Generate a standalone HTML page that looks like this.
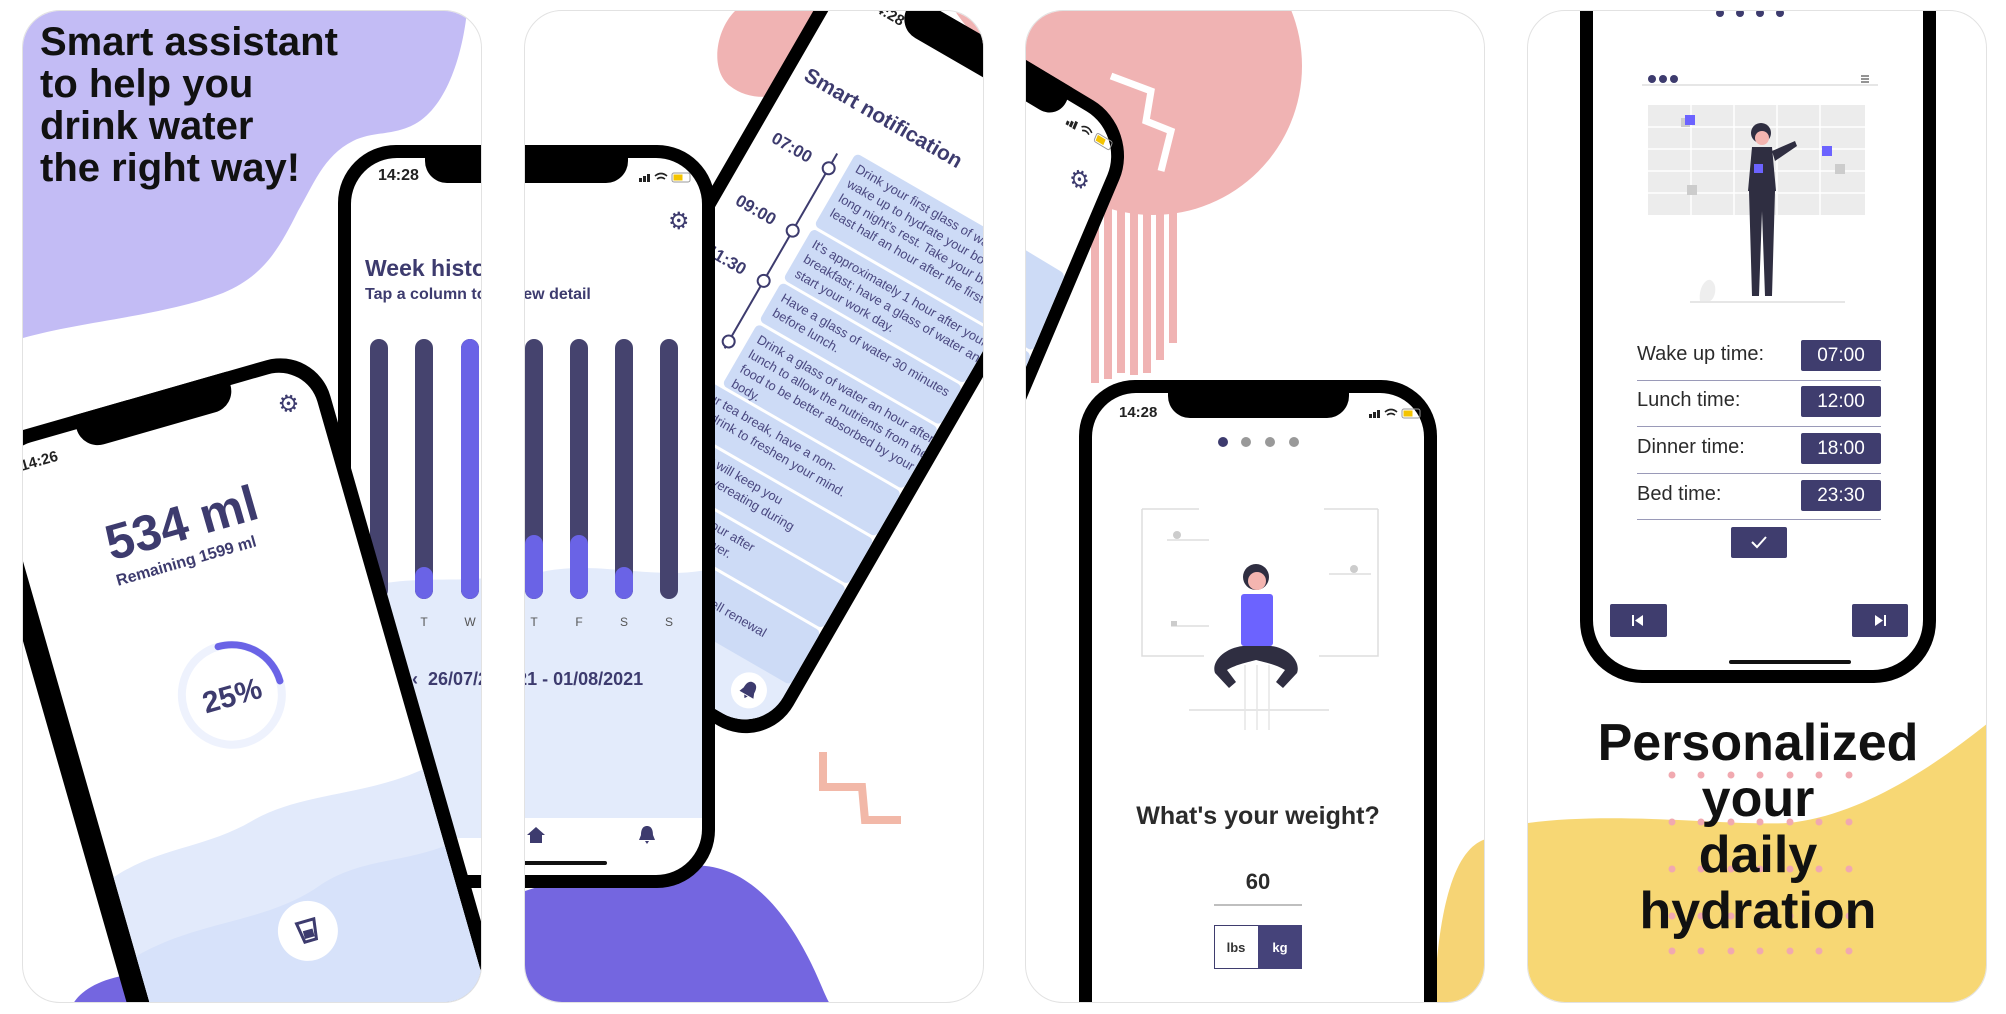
<!DOCTYPE html>
<html><head><meta charset="utf-8">
<style>
*{margin:0;padding:0;box-sizing:border-box}
html,body{width:2006px;height:1014px;overflow:hidden}
body{background:#fff;position:relative;font-family:"Liberation Sans","DejaVu Sans",sans-serif}
.panel{position:absolute;top:10px;width:460px;height:993px;border-radius:38px;overflow:hidden;border:1px solid #e2e2e2;background:#fff}
.abs{position:absolute}
.phone{position:absolute;background:#000}
.screen{position:absolute;background:#fff;overflow:hidden}
.notch{position:absolute;top:0;background:#000;border-radius:0 0 22px 22px}
.b{font-weight:bold}
.gear{position:absolute;font-family:"DejaVu Sans",sans-serif;color:#3d3b6e;line-height:1}
.bar{position:absolute;width:18px;border-radius:9px;background:#45436e;overflow:hidden}
.bar i{position:absolute;left:0;right:0;bottom:0;background:#6a63e6;border-radius:9px}
.day{position:absolute;font-size:12px;color:#555;width:20px;text-align:center}
.card{position:absolute;background:#cddbf6;color:#4a4880;font-size:13px;line-height:17px;padding:4px 8px;border-radius:5px;white-space:nowrap;overflow:hidden}
.tl{position:absolute;font-size:17px;font-weight:bold;color:#3d3b6e}
.circ{position:absolute;width:14px;height:14px;border-radius:50%;border:2px solid #3d3b6e;background:#fff}
.row{position:absolute;left:57px;width:244px;height:1px;background:#9a9ab8}
.lab{position:absolute;left:57px;font-size:20px;color:#2b2b2b}
.tbox{position:absolute;left:221px;width:80px;height:31px;background:#3f3d6e;color:#fff;font-size:19px;text-align:center;line-height:31px;border-radius:2px}
</style></head><body>

<!-- PANEL 1 -->
<div class="panel" style="left:22px">
  <svg class="abs" style="left:0;top:0" width="460" height="993">
    <path d="M0,0 L444,0 C440,40 425,95 392,113 C370,125 350,120 330,130 C300,145 290,175 275,200 C255,240 240,265 200,282 C140,305 60,310 0,327 Z" fill="#c3bcf5"/>
    <path d="M50,993 C60,975 90,962 130,962 L150,993 Z" fill="#7466e0"/>
  </svg>
  <div class="abs b" style="left:17px;top:10px;font-size:40px;line-height:42px;color:#111">Smart assistant<br>to help you<br>drink water<br>the right way!</div>

  <!-- phone 2 (week) part -->
  <div class="phone" style="left:315px;top:134px;width:358px;height:743px;border-radius:58px">
    <div class="screen" style="left:13px;top:13px;right:13px;bottom:13px;border-radius:46px">
      <svg class="abs" style="left:-13px;top:380px" width="358" height="300"><path d="M0,60 C60,30 120,50 180,35 C240,20 300,45 358,30 L358,300 L0,300Z" fill="#e3ebfb"/></svg>
    </div>
    <div class="notch" style="left:87px;width:184px;height:38px"></div>
    <div class="abs b" style="left:40px;top:22px;font-size:16px;color:#222">14:28</div>
    <div class="abs b" style="left:27px;top:110px;font-size:23px;color:#3d3b6e">Week history</div>
    <div class="abs b" style="left:27px;top:141px;font-size:16px;color:#3d3b6e">Tap a column to view detail</div>
    <div class="bar" style="left:32px;top:194px;height:260px"></div>
    <div class="bar" style="left:77px;top:194px;height:260px"><i style="height:32px"></i></div>
    <div class="bar" style="left:123px;top:194px;height:260px"><i style="height:260px"></i></div>
    <div class="day" style="left:31px;top:470px">M</div><div class="day" style="left:76px;top:470px">T</div><div class="day" style="left:122px;top:470px">W</div>
    <div class="abs b" style="left:74px;top:524px;font-size:18px;color:#3d3b6e">‹ &nbsp;26/07/2021 - 01/08/2021</div>
  </div>

  <!-- phone 1 rotated -->
  <div class="phone" style="left:-70px;top:335px;width:363px;height:1000px;border-radius:52px;transform-origin:363px 0;transform:rotate(-16deg)">
    <div class="screen" style="left:22px;top:14px;right:14px;bottom:14px;border-radius:40px">
      <svg class="abs" style="left:-22px;top:380px" width="363" height="620"><path d="M0,70 C60,40 110,60 170,45 C230,30 290,55 363,40 L363,620 L0,620Z" fill="#e2eafb"/><path d="M0,150 C80,120 150,150 220,125 C270,110 310,130 363,120 L363,620 L0,620Z" fill="#d7e2fa"/></svg>
    </div>
    <div class="notch" style="left:110px;width:160px;height:36px"></div>
    <div class="abs b" style="left:46px;top:26px;font-size:15px;color:#222">14:26</div>
    <div class="gear" style="left:310px;top:36px;font-size:24px">⚙</div>
    <div class="abs b" style="left:55px;top:104px;width:260px;text-align:center;font-size:50px;color:#3d3b6e">534 ml</div>
    <div class="abs b" style="left:49px;top:163px;width:260px;text-align:center;font-size:16px;color:#3d3b6e">Remaining 1599 ml</div>
    <svg class="abs" style="left:130px;top:256px" width="112" height="112"><circle cx="56" cy="56" r="50" fill="#fff" stroke="#eef2fd" stroke-width="8"/><path d="M56,6 A50,50 0 0 1 106,56" fill="none" stroke="#6a63e6" stroke-width="7" stroke-linecap="round"/><text x="56" y="67" text-anchor="middle" font-size="30" font-weight="bold" fill="#3d3b6e" font-family="Liberation Sans">25%</text></svg>
    <div class="abs" style="left:164px;top:530px;width:60px;height:60px;border-radius:50%;background:#fff"></div>
    <svg class="abs" style="left:182px;top:547px" width="24" height="26"><path d="M3,3 L21,3 L18,23 L6,23 Z" fill="none" stroke="#3d3b6e" stroke-width="3"/><rect x="7" y="12" width="10" height="8" fill="#3d3b6e"/></svg>
  </div>
</div>

<!-- PANEL 2 -->
<div class="panel" style="left:524px">
  <svg class="abs" style="left:0;top:0" width="460" height="993">
    <path d="M210,0 C190,20 185,60 205,75 C230,95 270,85 290,65 L295,0Z" fill="#f0b3b3"/>
    <path d="M430,0 L462,0 L462,40 C450,25 440,15 430,0Z" fill="#f0b3b3"/>
    <path d="M0,880 C60,860 120,860 160,855 C220,848 260,900 285,950 C295,970 300,985 305,993 L0,993Z" fill="#7466e0"/>
    <polyline points="298,741 298,776 337,776 340,809 376,809" fill="none" stroke="#f2b8a8" stroke-width="8"/>
  </svg>
  <!-- phone 3 rotated -->
  <div class="phone" style="left:320px;top:-55px;width:330px;height:730px;border-radius:55px;transform-origin:0 0;transform:rotate(30deg)">
    <div class="screen" style="left:13px;top:13px;right:13px;bottom:13px;border-radius:44px">
      <svg class="abs" style="left:-13px;top:600px" width="330" height="130"><path d="M0,40 C80,20 200,50 330,25 L330,130 L0,130Z" fill="#e3ebfb"/></svg>
    </div>
    <div class="notch" style="left:80px;width:170px;height:36px"></div>
    <div class="abs b" style="left:45px;top:20px;font-size:15px;color:#222">14:28</div>
    <div class="abs b" style="left:25px;top:110px;font-size:21px;color:#3d3b6e">Smart notification</div>
    <div class="abs" style="left:91px;top:175px;width:2px;height:225px;background:#3d3b6e"></div>
    <div class="tl" style="left:28px;top:183px">07:00</div><div class="circ" style="left:85px;top:185px"></div>
    <div class="tl" style="left:28px;top:255px">09:00</div><div class="circ" style="left:85px;top:257px"></div>
    <div class="tl" style="left:28px;top:313px">11:30</div><div class="circ" style="left:85px;top:315px"></div>
    <div class="circ" style="left:85px;top:385px"></div>
    <div class="card" style="left:108px;top:165px;width:209px;height:84px">Drink your first glass of water after you<br>wake up to hydrate your body after a<br>long night's rest. Take your breakfast at<br>least half an hour after the first glass.</div>
    <div class="card" style="left:108px;top:252px;width:209px;height:59px">It's approximately 1 hour after your<br>breakfast; have a glass of water and<br>start your work day.</div>
    <div class="card" style="left:108px;top:314px;width:209px;height:45px">Have a glass of water 30 minutes<br>before lunch.</div>
    <div class="card" style="left:108px;top:362px;width:209px;height:71px">Drink a glass of water an hour after<br>lunch to allow the nutrients from the<br>food to be better absorbed by your<br>body.</div>
    <div class="card" style="left:40px;top:436px;width:277px;height:52px">During your tea break, have a non-<br>sweetened drink to freshen your mind.</div>
    <div class="card" style="left:40px;top:491px;width:277px;height:52px">A glass of water will keep you<br>full and prevent overeating during</div>
    <div class="card" style="left:40px;top:546px;width:277px;height:48px">A glass of water an hour after<br>dinner, before you shower.</div>
    <div class="card" style="left:40px;top:597px;width:277px;height:62px">A glass of water an hour<br>before sleep will aid in the cell renewal<br>process during sleep.</div>
    <div class="abs" style="left:266px;top:666px;width:36px;height:36px;border-radius:50%;background:#fff"></div>
    <svg class="abs" style="left:274px;top:673px" width="20" height="22"><path d="M10,2 C5,2 4,7 4,11 L2,16 L18,16 L16,11 C16,7 15,2 10,2Z M8,17 L12,17 L10,20Z" fill="#3d3b6e"/></svg>
  </div>
  <!-- phone 2 part -->
  <div class="phone" style="left:-168px;top:134px;width:358px;height:743px;border-radius:58px">
    <div class="screen" style="left:13px;top:13px;right:13px;bottom:13px;border-radius:46px">
      <svg class="abs" style="left:-13px;top:380px" width="358" height="300"><path d="M0,60 C60,30 120,50 180,35 C240,20 300,45 358,30 L358,280 L0,280Z" fill="#e3ebfb"/></svg>
    </div>
    <div class="notch" style="left:87px;width:184px;height:38px"></div>
    <svg class="abs" style="left:282px;top:26px" width="56" height="12"><rect x="0" y="7" width="3" height="4" fill="#222"/><rect x="4" y="5" width="3" height="6" fill="#222"/><rect x="8" y="3" width="3" height="8" fill="#222"/><path d="M16,5 Q22,0 28,5 M18,8 Q22,5 26,8" stroke="#222" stroke-width="1.6" fill="none"/><rect x="33" y="2" width="18" height="9" rx="2" fill="none" stroke="#999"/><rect x="34.5" y="3.5" width="9" height="6" fill="#f4c400"/></svg>
    <div class="gear" style="left:311px;top:64px;font-size:24px">⚙</div>
    <div class="abs b" style="left:27px;top:141px;font-size:16px;color:#3d3b6e">Tap a column to view detail</div>
    <div class="bar" style="left:168px;top:194px;height:260px"><i style="height:64px"></i></div>
    <div class="bar" style="left:213px;top:194px;height:260px"><i style="height:64px"></i></div>
    <div class="bar" style="left:258px;top:194px;height:260px"><i style="height:32px"></i></div>
    <div class="bar" style="left:303px;top:194px;height:260px"></div>
    <div class="day" style="left:167px;top:470px">T</div><div class="day" style="left:212px;top:470px">F</div><div class="day" style="left:257px;top:470px">S</div><div class="day" style="left:302px;top:470px">S</div>
    <div class="abs b" style="left:74px;top:524px;font-size:18px;color:#3d3b6e">‹ &nbsp;26/07/2021 - 01/08/2021</div>
    <svg class="abs" style="left:168px;top:680px" width="22" height="20"><path d="M11,2 L2,10 L5,10 L5,18 L17,18 L17,10 L20,10Z" fill="#3d3b6e"/></svg>
    <svg class="abs" style="left:280px;top:679px" width="20" height="22"><path d="M10,2 C5,2 4,7 4,11 L2,16 L18,16 L16,11 C16,7 15,2 10,2Z M8,17 L12,17 L10,20Z" fill="#3d3b6e"/></svg>
    <div class="abs" style="left:110px;top:716px;width:140px;height:4px;background:#111;border-radius:2px"></div>
  </div>
</div>

<!-- PANEL 3 -->
<div class="panel" style="left:1025px">
  <svg class="abs" style="left:0;top:0" width="460" height="993">
    <circle cx="127" cy="55" r="149" fill="#f0b3b3"/>
    <g fill="#f0b3b3"><rect x="65" y="190" width="8" height="182"/><rect x="78" y="190" width="8" height="178"/><rect x="91" y="190" width="8" height="172"/><rect x="104" y="190" width="8" height="174"/><rect x="117" y="190" width="8" height="172"/><rect x="130" y="190" width="8" height="159"/><rect x="143" y="190" width="8" height="142"/></g>
    <path d="M85,65 L125,80 L120,110 L145,120 L135,160" fill="none" stroke="#fff" stroke-width="7"/>
    <path d="M460,828 C437,835 413,870 408,993 L460,993Z" fill="#f6d475"/>
  </svg>
  <!-- phone 3 continued -->
  <div class="phone" style="left:0;top:0;width:330px;height:730px;border-radius:55px;transform-origin:0 0;transform:matrix(0.857,0.515,-0.39,0.92,-168,-52)">
    <div class="screen" style="left:13px;top:13px;right:13px;bottom:13px;border-radius:44px"></div>
    <div class="notch" style="left:80px;width:170px;height:36px"></div>
    <svg class="abs" style="left:258px;top:24px" width="56" height="12"><rect x="0" y="7" width="3" height="4" fill="#222"/><rect x="4" y="5" width="3" height="6" fill="#222"/><rect x="8" y="3" width="3" height="8" fill="#222"/><path d="M16,5 Q22,0 28,5 M18,8 Q22,5 26,8" stroke="#222" stroke-width="1.6" fill="none"/><rect x="33" y="2" width="18" height="9" rx="2" fill="none" stroke="#999"/><rect x="34.5" y="3.5" width="9" height="6" fill="#f4c400"/></svg>
    <div class="gear" style="left:282px;top:64px;font-size:24px">⚙</div>
    <div class="card" style="left:210px;top:165px;width:107px;height:84px">after you<br>after a<br>breakfast at<br>glass.</div>
    <div class="card" style="left:210px;top:252px;width:107px;height:59px">your<br>and</div>
    <div class="card" style="left:210px;top:314px;width:107px;height:45px"></div>
  </div>
  <!-- phone 4 -->
  <div class="phone" style="left:53px;top:369px;width:358px;height:700px;border-radius:56px">
    <div class="screen" style="left:13px;top:13px;right:13px;bottom:0;border-radius:44px 44px 0 0"></div>
    <div class="notch" style="left:89px;width:181px;height:38px"></div>
    <div class="abs b" style="left:40px;top:24px;font-size:15px;color:#222">14:28</div>
    <svg class="abs" style="left:290px;top:27px" width="56" height="12"><rect x="0" y="7" width="3" height="4" fill="#222"/><rect x="4" y="5" width="3" height="6" fill="#222"/><rect x="8" y="3" width="3" height="8" fill="#222"/><path d="M16,5 Q22,0 28,5 M18,8 Q22,5 26,8" stroke="#222" stroke-width="1.6" fill="none"/><rect x="33" y="2" width="18" height="9" rx="2" fill="none" stroke="#999"/><rect x="34.5" y="3.5" width="9" height="6" fill="#f4c400"/></svg>
    <svg class="abs" style="left:0;top:0" width="358" height="700">
      <circle cx="144" cy="62" r="5" fill="#3d3b6e"/><circle cx="167" cy="62" r="5" fill="#999"/><circle cx="191" cy="62" r="5" fill="#999"/><circle cx="215" cy="62" r="5" fill="#999"/>
      <g stroke="#ddd" fill="none" stroke-width="1.5"><path d="M63,129 L63,276 L125,276 M63,129 L120,129 M299,129 L299,276 L240,276 M299,129 L245,129"/><path d="M88,160 L130,160 M250,194 L292,194 M92,246 L130,246"/><path d="M110,330 L250,330"/></g>
      <circle cx="98" cy="155" r="4" fill="#ccc"/><circle cx="275" cy="189" r="4" fill="#ccc"/><rect x="92" y="241" width="6" height="5" fill="#ccc"/>
      <circle cx="177" cy="197" r="13" fill="#2f2e41"/><circle cx="178" cy="201" r="9" fill="#f4b5b0"/>
      <rect x="162" y="214" width="32" height="52" rx="3" fill="#6c63ff"/>
      <path d="M164,266 C145,268 132,282 136,293 L150,308 L157,302 L148,290 C158,284 170,282 177,280 C184,282 196,284 206,290 L197,302 L204,308 L218,293 C222,282 210,268 192,266Z" fill="#2f2e41"/>
      <g stroke="#e6e6e6" stroke-width="1.5"><path d="M166,285 L166,350 M190,285 L190,350 M178,285 L178,350"/></g>
      <text x="179" y="444" text-anchor="middle" font-size="25" font-weight="bold" fill="#2b2b2b" font-family="Liberation Sans">What's your weight?</text>
      <text x="179" y="509" text-anchor="middle" font-size="22" font-weight="bold" fill="#2b2b2b" font-family="Liberation Sans">60</text>
      <line x1="135" y1="525" x2="223" y2="525" stroke="#aaa" stroke-width="1.5"/>
      <rect x="135.5" y="545.5" width="44" height="43" fill="#fff" stroke="#3f3d6e"/><rect x="179" y="545" width="44" height="44" fill="#45437a"/>
      <text x="157" y="572" text-anchor="middle" font-size="13" font-weight="bold" fill="#333" font-family="Liberation Sans">lbs</text>
      <text x="201" y="572" text-anchor="middle" font-size="13" font-weight="bold" fill="#fff" font-family="Liberation Sans">kg</text>
    </svg>
  </div>
</div>

<!-- PANEL 4 -->
<div class="panel" style="left:1527px">
  <svg class="abs" style="left:0;top:0" width="460" height="993">
    <path d="M0,812 C90,800 200,815 260,812 C330,805 400,760 460,712 L460,993 L0,993Z" fill="#f7d774"/>
  </svg>
  <div class="phone" style="left:52px;top:-60px;width:356px;height:732px;border-radius:0 0 62px 62px">
    <div class="screen" style="left:13px;top:0;right:13px;bottom:13px;border-radius:0 0 50px 50px"></div>
    <svg class="abs" style="left:0;top:0" width="356" height="732">
      <circle cx="140" cy="62" r="4" fill="#3d3b6e"/><circle cx="160" cy="62" r="4" fill="#3d3b6e"/><circle cx="180" cy="62" r="4" fill="#3d3b6e"/><circle cx="200" cy="62" r="4" fill="#3d3b6e"/>
      <circle cx="72" cy="128" r="4" fill="#3d3b6e"/><circle cx="83" cy="128" r="4" fill="#3d3b6e"/><circle cx="94" cy="128" r="4" fill="#3d3b6e"/>
      <path d="M281,125 h8 M281,128 h8 M281,131 h8" stroke="#555" stroke-width="1.3"/>
      <line x1="62" y1="134" x2="298" y2="134" stroke="#ddd" stroke-width="1.5"/>
      <rect x="68" y="154" width="217" height="110" fill="#ececec"/>
      <g stroke="#fff" stroke-width="1.5"><path d="M111,154 V264 M154,154 V264 M197,154 V264 M240,154 V264 M68,176 H285 M68,198 H285 M68,220 H285 M68,242 H285"/></g>
      <rect x="101" y="167" width="9" height="9" fill="#ccc"/><rect x="105" y="164" width="10" height="10" fill="#6c63ff"/>
      <rect x="242" y="195" width="10" height="10" fill="#6c63ff"/><rect x="255" y="213" width="10" height="10" fill="#ccc"/><rect x="107" y="234" width="10" height="10" fill="#ccc"/>
      <circle cx="181" cy="182" r="10" fill="#2f2e41"/><circle cx="182" cy="187" r="7" fill="#f4b5b0"/>
      <path d="M172,196 L192,196 L196,240 L168,240Z" fill="#2f2e41"/><path d="M192,200 L215,190 L217,195 L195,210Z" fill="#2f2e41"/>
      <rect x="174" y="213" width="9" height="9" fill="#6c63ff"/>
      <path d="M169,240 L195,240 L192,345 L185,345 L182,260 L179,345 L172,345Z" fill="#2f2e41"/>
      <path d="M120,350 C118,335 128,325 132,330 C138,335 135,348 130,350Z" fill="#eee"/>
      <line x1="110" y1="351" x2="265" y2="351" stroke="#ddd" stroke-width="1.5"/>
      <line x1="151" y1="711" x2="269" y2="711" stroke="#111" stroke-width="4" stroke-linecap="round"/>
    </svg>
    <div class="lab" style="top:392px">Wake up time:</div><div class="tbox" style="top:389px">07:00</div><div class="row" style="top:429px"></div>
    <div class="lab" style="top:438px">Lunch time:</div><div class="tbox" style="top:435px">12:00</div><div class="row" style="top:475px"></div>
    <div class="lab" style="top:485px">Dinner time:</div><div class="tbox" style="top:482px">18:00</div><div class="row" style="top:522px"></div>
    <div class="lab" style="top:532px">Bed time:</div><div class="tbox" style="top:529px">23:30</div><div class="row" style="top:568px"></div>
    <div class="abs" style="left:151px;top:576px;width:56px;height:31px;background:#3f3d6e;border-radius:2px"></div>
    <svg class="abs" style="left:170px;top:584px" width="18" height="14"><path d="M2,7 L7,12 L16,2" stroke="#fff" stroke-width="2" fill="none"/></svg>
    <div class="abs" style="left:30px;top:653px;width:57px;height:33px;background:#3f3d6e;border-radius:2px"></div>
    <svg class="abs" style="left:51px;top:663px" width="14" height="13"><rect x="1" y="1" width="2" height="11" fill="#fff"/><path d="M12,1 L4,6.5 L12,12Z" fill="#fff"/></svg>
    <div class="abs" style="left:272px;top:653px;width:56px;height:33px;background:#3f3d6e;border-radius:2px"></div>
    <svg class="abs" style="left:293px;top:663px" width="14" height="13"><path d="M2,1 L10,6.5 L2,12Z" fill="#fff"/><rect x="11" y="1" width="2" height="11" fill="#fff"/></svg>
  </div>
  <svg class="abs" style="left:0;top:0" width="460" height="993">
    <g fill="#f1a9b0">
      <circle cx="144" cy="764" r="3.5"/><circle cx="173" cy="764" r="3.5"/><circle cx="203" cy="764" r="3.5"/><circle cx="232" cy="764" r="3.5"/><circle cx="262" cy="764" r="3.5"/><circle cx="291" cy="764" r="3.5"/><circle cx="321" cy="764" r="3.5"/>
      <circle cx="144" cy="811" r="3.5"/><circle cx="173" cy="811" r="3.5"/><circle cx="203" cy="811" r="3.5"/><circle cx="232" cy="811" r="3.5"/><circle cx="262" cy="811" r="3.5"/><circle cx="291" cy="811" r="3.5"/><circle cx="321" cy="811" r="3.5"/>
      <circle cx="144" cy="858" r="3.5"/><circle cx="173" cy="858" r="3.5"/><circle cx="203" cy="858" r="3.5"/><circle cx="232" cy="858" r="3.5"/><circle cx="262" cy="858" r="3.5"/><circle cx="291" cy="858" r="3.5"/><circle cx="321" cy="858" r="3.5"/>
      <circle cx="144" cy="905" r="3.5"/><circle cx="173" cy="905" r="3.5"/><circle cx="203" cy="905" r="3.5"/><circle cx="232" cy="905" r="3.5"/><circle cx="262" cy="905" r="3.5"/><circle cx="291" cy="905" r="3.5"/><circle cx="321" cy="905" r="3.5"/>
      <circle cx="144" cy="940" r="3.5"/><circle cx="173" cy="940" r="3.5"/><circle cx="203" cy="940" r="3.5"/><circle cx="232" cy="940" r="3.5"/><circle cx="262" cy="940" r="3.5"/><circle cx="291" cy="940" r="3.5"/><circle cx="321" cy="940" r="3.5"/>
    </g>
  </svg>
  <div class="abs b" style="left:0;top:704px;width:460px;text-align:center;font-size:52px;line-height:56px;color:#111">Personalized<br>your<br>daily<br>hydration</div>
</div>

</body></html>
